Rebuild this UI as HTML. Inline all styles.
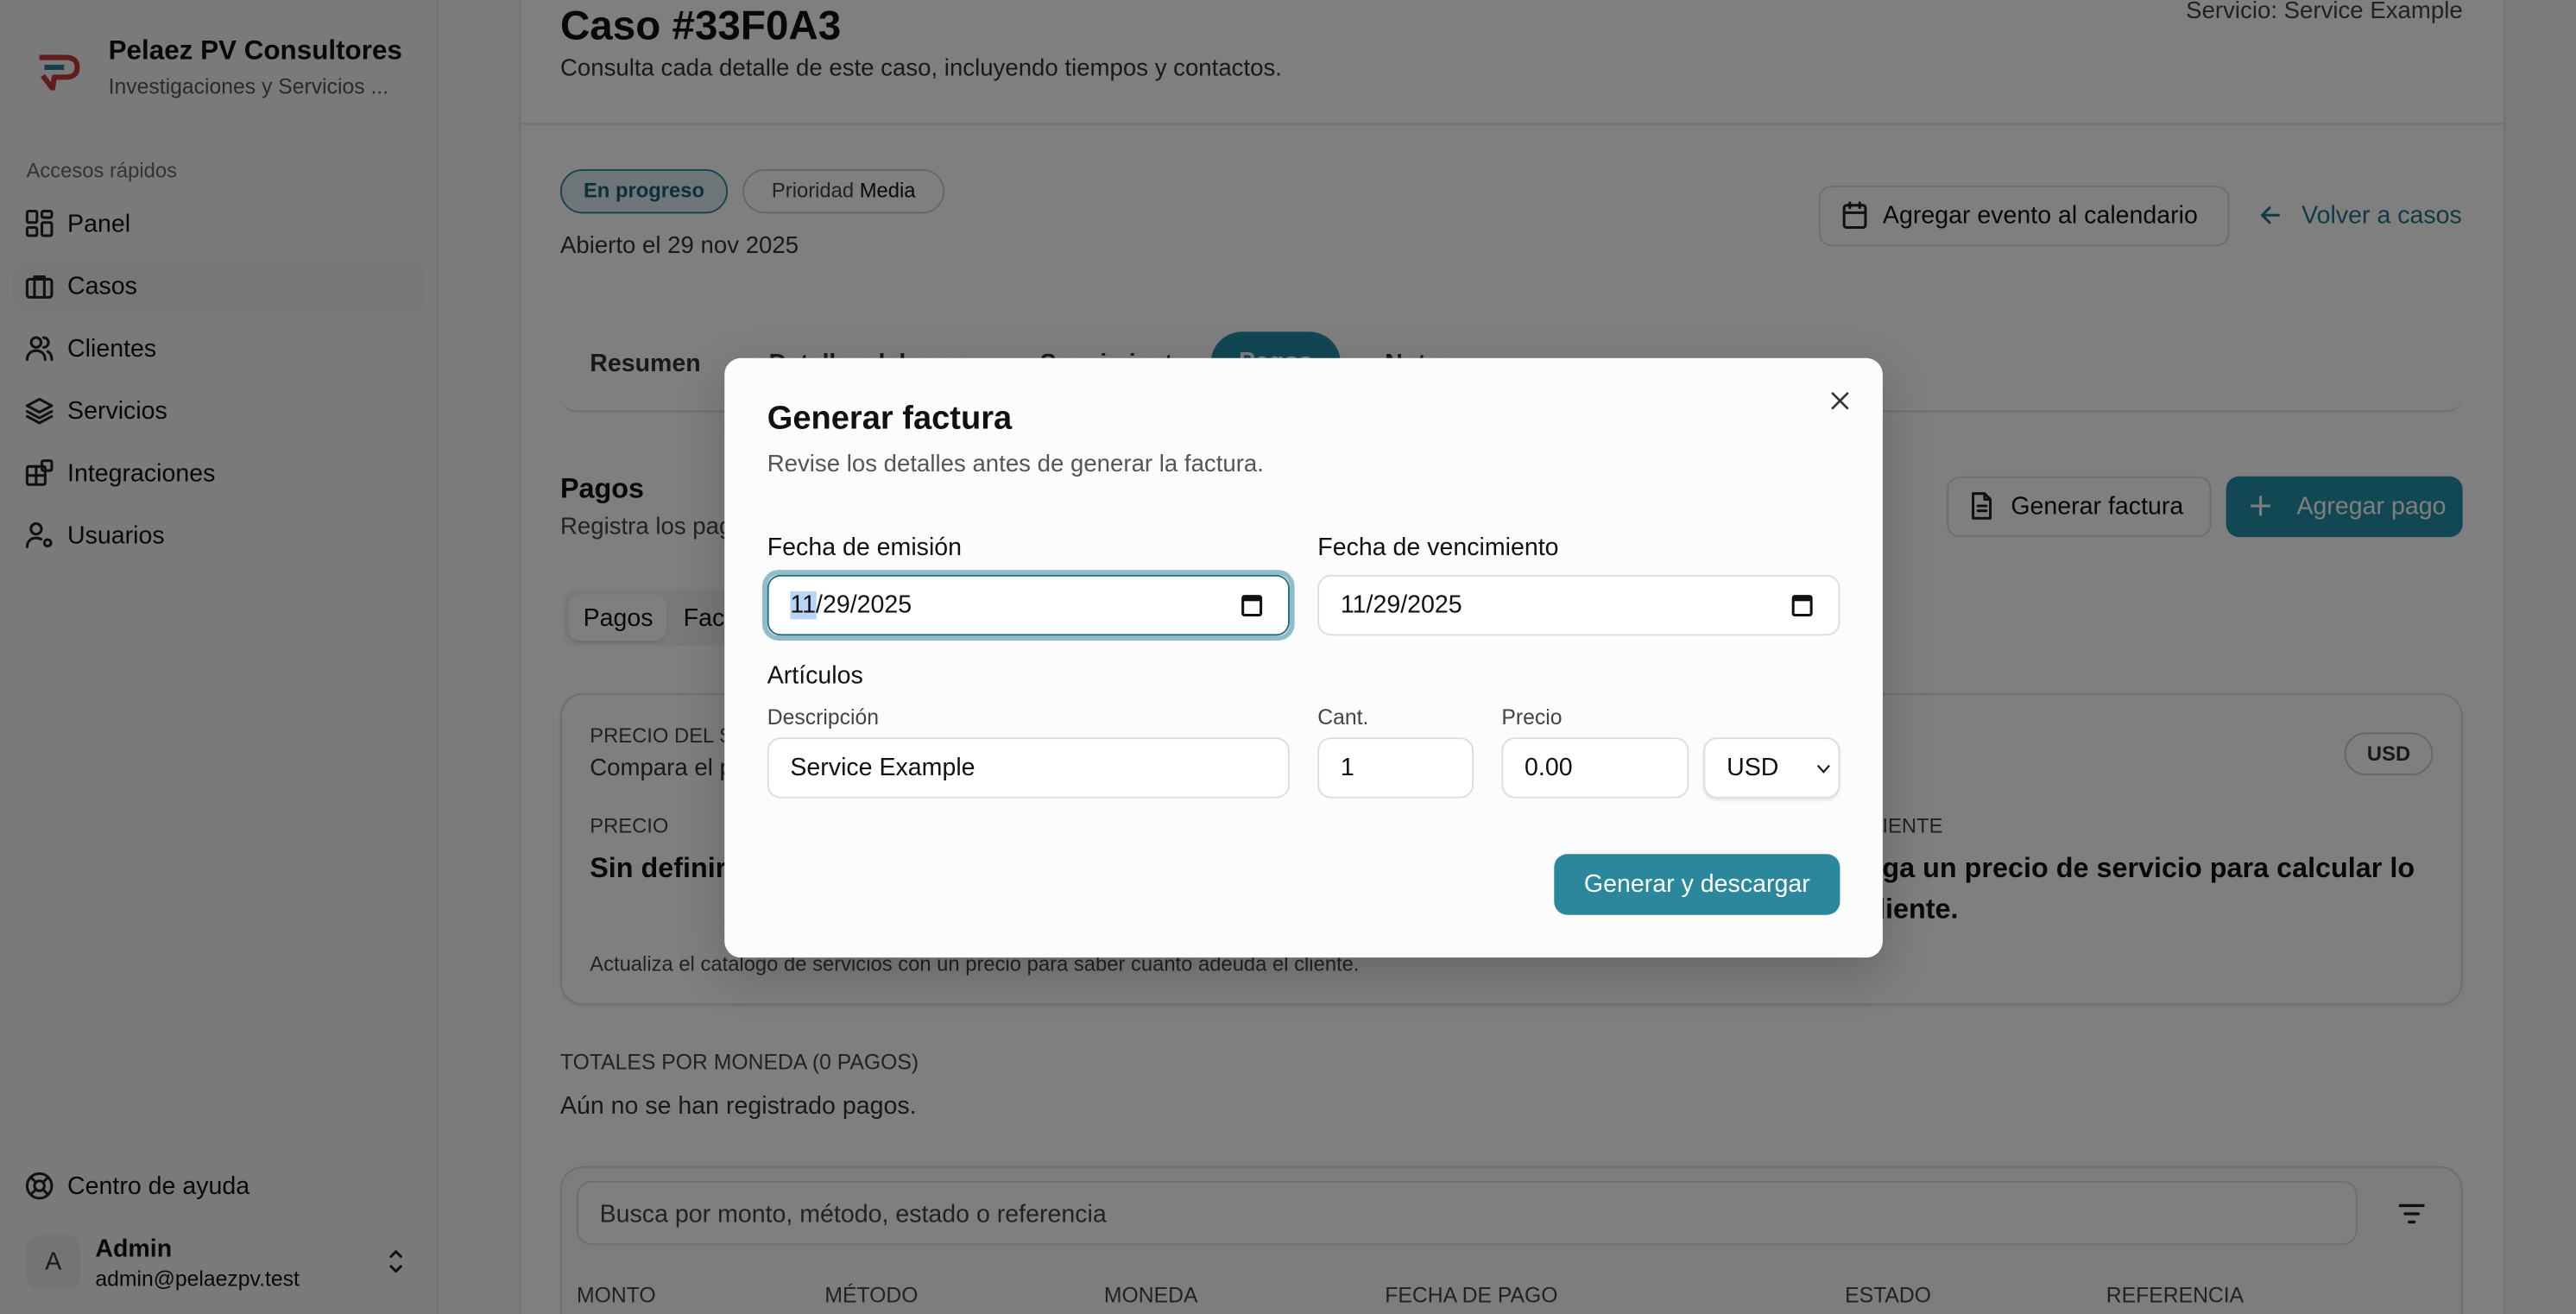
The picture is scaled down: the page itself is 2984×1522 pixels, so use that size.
<!DOCTYPE html>
<html><head><meta charset="utf-8">
<style>
html,body{margin:0;padding:0;width:2984px;height:1522px;overflow:hidden;background:#7d7d7d}
#s{position:absolute;left:0;top:0;width:1568px;height:800px;overflow:hidden;transform:scale(1.90306,1.9025);transform-origin:0 0;font-family:"Liberation Sans",sans-serif;color:#111;background:#f7f7f7}
.a{position:absolute;white-space:nowrap}
.c{line-height:20px}
svg{position:absolute}
.ic{fill:none;stroke:#222;stroke-width:1.6;stroke-linecap:round;stroke-linejoin:round}
.box{position:absolute;box-sizing:border-box}
#ov{position:absolute;left:0;top:0;width:1568px;height:800px;background:rgba(0,0,0,.5)}
.inp{position:absolute;box-sizing:border-box;border:1px solid #ddd;border-radius:8px;background:#fff;height:37px;font-size:15px;line-height:35px;padding-left:13px}
</style></head><body><div id="s">
<div class="box" style="left:0;top:0;width:267px;height:800px;background:#f5f5f5;border-right:1px solid #e2e2e2"></div>
<svg width="30" height="30" style="left:20px;top:25px" viewBox="0 0 30 30"><path d="M4 10 L20 10 Q27 10 27 16 Q27 22 20 22 L13 22 L12 29 L6 21" fill="none" stroke="#c43a3f" stroke-width="3.2" stroke-linejoin="round"/><path d="M7 16 L19 16" stroke="#2a7f95" stroke-width="3.2"/></svg>
<div class="a c" style="left:66px;top:21px;font-size:16.5px;font-weight:bold">Pelaez PV Consultores</div>
<div class="a c" style="left:66px;top:43px;font-size:13px;color:#555">Investigaciones y Servicios ...</div>
<div class="a c" style="left:16px;top:94px;font-size:12.5px;color:#666">Accesos rápidos</div>
<div class="box" style="left:8px;top:159px;width:250px;height:31px;background:#eee;border-radius:7px"></div>
<svg width="18" height="18" style="left:15px;top:127px" viewBox="0 0 18 18" class="ic"><rect x="1.5" y="1.5" width="6" height="7" rx="1"/><rect x="10.5" y="1.5" width="6" height="4" rx="1"/><rect x="1.5" y="11.5" width="6" height="5" rx="1"/><rect x="10.5" y="8.5" width="6" height="8" rx="1"/></svg>
<div class="a c" style="left:41px;top:127px;font-size:15px">Panel</div>
<svg width="18" height="18" style="left:15px;top:165px" viewBox="0 0 18 18" class="ic"><rect x="1.5" y="5" width="15" height="11" rx="1.5"/><path d="M6 16V3.5h6V16"/></svg>
<div class="a c" style="left:41px;top:165px;font-size:15px">Casos</div>
<svg width="18" height="18" style="left:15px;top:203px" viewBox="0 0 18 18" class="ic"><circle cx="7" cy="5.5" r="3"/><path d="M1.5 16c0-3.5 2.5-5.5 5.5-5.5s5.5 2 5.5 5.5M11.5 2.5a3 3 0 0 1 0 6M14 11c1.5.8 2.5 2.5 2.5 5"/></svg>
<div class="a c" style="left:41px;top:203px;font-size:15px">Clientes</div>
<svg width="18" height="18" style="left:15px;top:241px" viewBox="0 0 18 18" class="ic"><path d="M9 2l7.5 4L9 10 1.5 6z"/><path d="M1.5 9.5L9 13.5l7.5-4M1.5 12.5L9 16.5l7.5-4"/></svg>
<div class="a c" style="left:41px;top:241px;font-size:15px">Servicios</div>
<svg width="18" height="18" style="left:15px;top:279px" viewBox="0 0 18 18" class="ic"><rect x="1.5" y="5" width="11" height="11" rx="1"/><path d="M1.5 10.5h11M7 5v11"/><rect x="10.5" y="1.5" width="6" height="6" rx="1"/></svg>
<div class="a c" style="left:41px;top:279px;font-size:15px">Integraciones</div>
<svg width="18" height="18" style="left:15px;top:317px" viewBox="0 0 18 18" class="ic"><circle cx="7" cy="5" r="3.2"/><path d="M1.5 16c0-3.5 2.5-5.5 5.5-5.5 1.2 0 2.2.3 3 .8"/><circle cx="14" cy="13.5" r="2"/></svg>
<div class="a c" style="left:41px;top:317px;font-size:15px">Usuarios</div>
<svg width="18" height="18" style="left:15px;top:713px" viewBox="0 0 18 18" class="ic"><circle cx="9" cy="9" r="7.5"/><circle cx="9" cy="9" r="3"/><path d="M3.7 3.7l3.2 3.2M14.3 3.7l-3.2 3.2M3.7 14.3l3.2-3.2M14.3 14.3l-3.2-3.2"/></svg>
<div class="a c" style="left:41px;top:713px;font-size:15px">Centro de ayuda</div>
<div class="box" style="left:16px;top:752px;width:33px;height:33px;border-radius:8px;background:#e8e8e8;font-size:15px;text-align:center;line-height:33px;color:#333">A</div>
<div class="a c" style="left:58px;top:751px;font-size:15px;font-weight:bold">Admin</div>
<div class="a c" style="left:58px;top:769px;font-size:13px">admin@pelaezpv.test</div>
<svg width="12" height="18" style="left:235px;top:759px" viewBox="0 0 12 18" class="ic"><path d="M3 6l3-3 3 3M3 12l3 3 3-3"/></svg>
<div class="box" style="left:316px;top:-10px;width:1209px;height:810px;background:#fff;border-left:1px solid #e2e2e2;border-right:1px solid #e2e2e2"></div>
<div class="box" style="left:316px;top:75px;width:1209px;height:1px;background:#e2e2e2"></div>
<div class="a" style="left:341px;top:1px;font-size:25px;line-height:30px;font-weight:bold">Caso #33F0A3</div>
<div class="a c" style="left:341px;top:32px;font-size:14.5px;color:#333">Consulta cada detalle de este caso, incluyendo tiempos y contactos.</div>
<div class="a c" style="right:69px;top:-3px;font-size:14.5px;color:#444">Servicio: Service Example</div>
<div class="box" style="left:341px;top:103px;width:102px;height:27px;border:1px solid #2a87a0;background:#dcecf2;border-radius:14px;font-size:12.5px;line-height:25px;text-align:center;color:#1d5f73;font-weight:bold">En progreso</div>
<div class="box" style="left:452px;top:103px;width:123px;height:27px;border:1px solid #ccc;border-radius:14px;font-size:12.5px;line-height:25px;text-align:center;color:#444">Prioridad <span style="color:#111">Media</span></div>
<div class="a c" style="left:341px;top:140px;font-size:14.5px;color:#333">Abierto el 29 nov 2025</div>
<div class="box" style="left:1107px;top:113px;width:250px;height:37px;border:1px solid #ddd;border-radius:8px;font-size:15px;line-height:35px;padding-left:38px">Agregar evento al calendario</div>
<svg width="18" height="18" style="left:1120px;top:122px" viewBox="0 0 18 18" class="ic"><rect x="2.5" y="3" width="13" height="13.5" rx="1.5"/><path d="M2.5 7.5h13M6 1.5v3M12 1.5v3"/></svg>
<svg width="16" height="16" style="left:1374px;top:123px" viewBox="0 0 16 16" class="ic"><path d="M13 8H3M7.5 3.5L3 8l4.5 4.5" stroke="#24758a"/></svg>
<div class="a c" style="left:1401px;top:122px;font-size:15px;color:#24758a">Volver a casos</div>
<div class="box" style="left:341px;top:200px;width:1158px;height:51px;border-bottom:1px solid #ddd;border-radius:0 0 10px 10px"></div>
<div class="a c" style="left:359px;top:212px;font-size:15px;color:#333;font-weight:bold">Resumen</div>
<div class="a c" style="left:468px;top:212px;font-size:15px;color:#333;font-weight:bold">Detalles del caso</div>
<div class="a c" style="left:633px;top:212px;font-size:15px;color:#333;font-weight:bold">Seguimiento</div>
<div class="box" style="left:737px;top:202px;width:79px;height:38px;border-radius:19px;background:#248ea8;color:#fff;font-size:15px;line-height:38px;text-align:center;font-weight:bold">Pagos</div>
<div class="a c" style="left:843px;top:212px;font-size:15px;color:#333;font-weight:bold">Notas</div>
<div class="a" style="left:341px;top:287px;font-size:17px;line-height:22px;font-weight:bold">Pagos</div>
<div class="a c" style="left:341px;top:311px;font-size:14.5px;color:#444">Registra los pagos del caso.</div>
<div class="box" style="left:1185px;top:290px;width:161px;height:37px;border:1px solid #ddd;border-radius:8px;font-size:15px;line-height:35px;padding-left:38px">Generar factura</div>
<svg width="18" height="18" style="left:1197px;top:299px" viewBox="0 0 18 18" class="ic"><path d="M4 1.5h7l3.5 3.5v11.5H4z"/><path d="M11 1.5V5h3.5M7 9h5M7 12h5"/></svg>
<div class="box" style="left:1355px;top:290px;width:144px;height:37px;border-radius:8px;background:#248ea8;color:#fff;font-size:15px;line-height:37px;padding-left:43px">Agregar pago</div>
<svg width="16" height="16" style="left:1368px;top:300px" viewBox="0 0 16 16"><path d="M8 2v12M2 8h12" stroke="#fff" stroke-width="1.6"/></svg>
<div class="box" style="left:343px;top:359px;width:160px;height:34px;background:#f3f3f3;border-radius:8px"></div>
<div class="box" style="left:346px;top:362px;width:60px;height:28px;background:#fff;border-radius:7px;box-shadow:0 1px 2px rgba(0,0,0,.1)"></div>
<div class="a c" style="left:355px;top:367px;font-size:15px">Pagos</div>
<div class="a c" style="left:416px;top:367px;font-size:15px">Facturas</div>
<div class="box" style="left:341px;top:422px;width:1158px;height:190px;border:1px solid #ddd;border-radius:14px;box-shadow:0 1px 3px rgba(0,0,0,.06)"></div>
<div class="a c" style="left:359px;top:438px;font-size:12.5px;color:#444">PRECIO DEL SERVICIO</div>
<div class="a c" style="left:359px;top:458px;font-size:14.5px;color:#333">Compara el precio del servicio con los pagos registrados.</div>
<div class="box" style="left:1427px;top:446px;width:54px;height:26px;border:1px solid #ccc;border-radius:13px;font-size:12.5px;line-height:24px;text-align:center;color:#333;font-weight:bold">USD</div>
<div class="a c" style="left:359px;top:493px;font-size:12.5px;color:#444">PRECIO</div>
<div class="a c" style="left:359px;top:519px;font-size:17px;font-weight:bold">Sin definir</div>
<div class="a c" style="left:1111px;top:493px;font-size:12.5px;color:#444">PENDIENTE</div>
<div class="a" style="left:1107px;top:516px;font-size:17px;line-height:25px;font-weight:bold">Agrega un precio de servicio para calcular lo<br>pendiente.</div>
<div class="a c" style="left:359px;top:577px;font-size:12.5px;color:#444">Actualiza el catalogo de servicios con un precio para saber cuanto adeuda el cliente.</div>
<div class="a c" style="left:341px;top:637px;font-size:13px;color:#444">TOTALES POR MONEDA (0 PAGOS)</div>
<div class="a c" style="left:341px;top:664px;font-size:15px;color:#333">Aún no se han registrado pagos.</div>
<div class="box" style="left:341px;top:710px;width:1158px;height:110px;border:1px solid #ddd;border-radius:14px;background:#fafafa"></div>
<div class="box" style="left:351px;top:719px;width:1084px;height:39px;border:1px solid #ddd;border-radius:9px;background:#fff;font-size:15px;line-height:39px;padding-left:13px;color:#444">Busca por monto, método, estado o referencia</div>
<svg width="18" height="18" style="left:1459px;top:730px" viewBox="0 0 18 18"><path d="M2 4h14M5 9h8M7.5 14h3" stroke="#222" stroke-width="1.8" stroke-linecap="round"/></svg>
<div class="a c" style="left:351px;top:779px;font-size:13px;color:#444">MONTO</div>
<div class="a c" style="left:502px;top:779px;font-size:13px;color:#444">MÉTODO</div>
<div class="a c" style="left:672px;top:779px;font-size:13px;color:#444">MONEDA</div>
<div class="a c" style="left:843px;top:779px;font-size:13px;color:#444">FECHA DE PAGO</div>
<div class="a c" style="left:1123px;top:779px;font-size:13px;color:#444">ESTADO</div>
<div class="a c" style="left:1282px;top:779px;font-size:13px;color:#444">REFERENCIA</div>
<div id="ov"></div>
<div class="box" style="left:441px;top:218px;width:705px;height:365px;background:#fcfcfc;border-radius:10px;box-shadow:0 10px 30px rgba(0,0,0,.2)"></div>
<div class="a" style="left:467px;top:242px;font-size:20px;line-height:26px;font-weight:bold">Generar factura</div>
<svg width="14" height="14" style="left:1113px;top:237px" viewBox="0 0 14 14"><path d="M2.5 2.5l9 9M11.5 2.5l-9 9" stroke="#333" stroke-width="1.4" stroke-linecap="round"/></svg>
<div class="a c" style="left:467px;top:273px;font-size:14.5px;color:#555">Revise los detalles antes de generar la factura.</div>
<div class="a c" style="left:467px;top:324px;font-size:15px;color:#111">Fecha de emisión</div>
<div class="a c" style="left:802px;top:324px;font-size:15px;color:#111">Fecha de vencimiento</div>
<div class="inp" style="left:464px;top:347px;width:324px;height:43px;border:3px solid #8fbcc7;border-radius:10px;padding:0"></div>
<div class="inp" style="left:467px;top:350px;width:318px;border:1.5px solid #1f6f7d;line-height:36px"><span style="background:#b8d4f6">11</span>/29/2025</div>
<svg width="14" height="16" style="left:755px;top:360px" viewBox="0 0 14 16"><rect x="1.5" y="3" width="11" height="11.5" rx="1" fill="none" stroke="#111" stroke-width="1.6"/><rect x="1.5" y="3" width="11" height="3" fill="#111"/></svg>
<div class="inp" style="left:802px;top:350px;width:318px;line-height:36px">11/29/2025</div>
<svg width="14" height="16" style="left:1090px;top:360px" viewBox="0 0 14 16"><rect x="1.5" y="3" width="11" height="11.5" rx="1" fill="none" stroke="#111" stroke-width="1.6"/><rect x="1.5" y="3" width="11" height="3" fill="#111"/></svg>
<div class="a c" style="left:467px;top:402px;font-size:15px;color:#111">Artículos</div>
<div class="a c" style="left:467px;top:427px;font-size:13px;color:#444">Descripción</div>
<div class="a c" style="left:802px;top:427px;font-size:13px;color:#444">Cant.</div>
<div class="a c" style="left:914px;top:427px;font-size:13px;color:#444">Precio</div>
<div class="inp" style="left:467px;top:449px;width:318px;line-height:36px">Service Example</div>
<div class="inp" style="left:802px;top:449px;width:95px;line-height:36px">1</div>
<div class="inp" style="left:914px;top:449px;width:114px;line-height:36px">0.00</div>
<div class="inp" style="left:1037px;top:449px;width:83px;line-height:36px;box-shadow:0 1px 2px rgba(0,0,0,.1)">USD</div>
<svg width="10" height="8" style="left:1105px;top:464px" viewBox="0 0 10 8"><path d="M1.5 2l3.5 4 3.5-4" fill="none" stroke="#222" stroke-width="1.2"/></svg>
<div class="box" style="left:946px;top:520px;width:174px;height:37px;border-radius:8px;background:#2a879c;color:#fff;font-size:15px;line-height:38px;text-align:center">Generar y descargar</div>
</div></body></html>
